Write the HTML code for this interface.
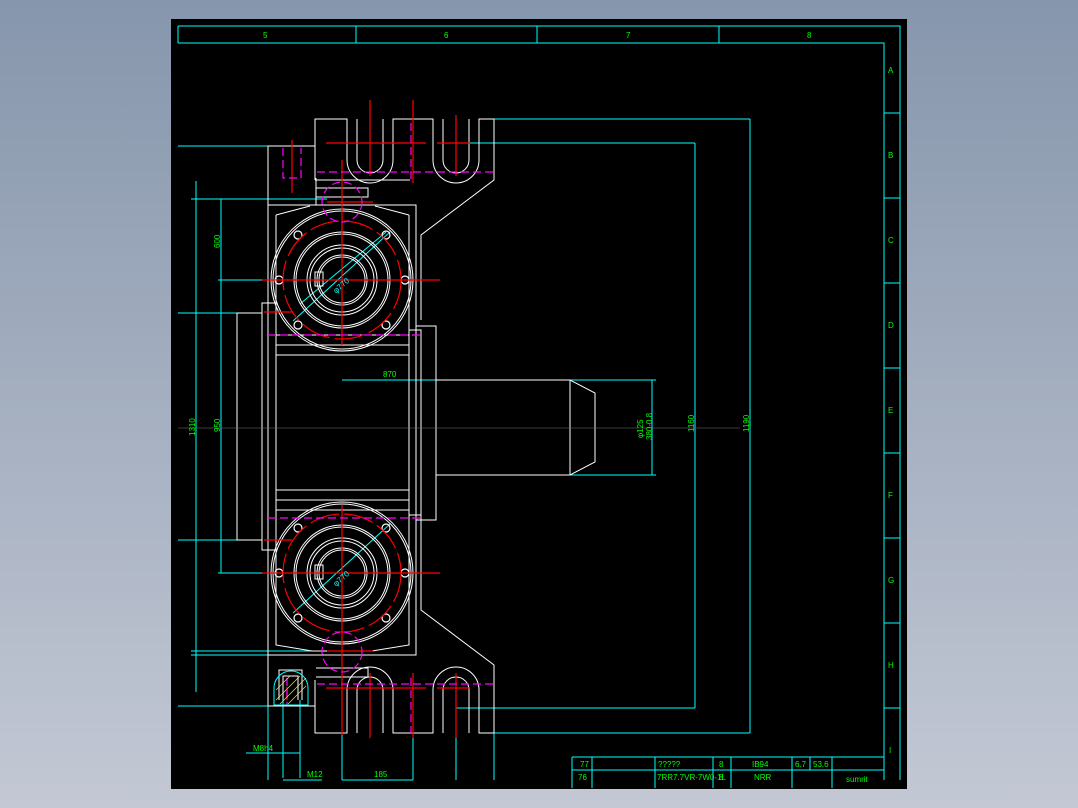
<!DOCTYPE html>
<html><head><style>
html,body{margin:0;padding:0;width:1078px;height:808px;overflow:hidden;background:linear-gradient(#8696ac,#c3c8d4);}
svg{position:absolute;left:0;top:0}
text{font-family:"Liberation Sans",sans-serif;fill:#00ff00;font-size:8px}
</style></head><body>
<svg width="1078" height="808" viewBox="0 0 1078 808">
<rect x="171" y="19" width="736" height="770" fill="#000"/>
<g stroke="#00ffff" stroke-width="1" fill="none">
<path d="M178 26H900V780M178 43H884V780M178 26V43M356 26V43M537 26V43M719 26V43"/>
<path d="M884 113H900M884 198H900M884 283H900M884 368H900M884 453H900M884 538H900M884 623H900M884 708H900"/>
<path d="M572 757H884M572 770H884M572 757V788M592 757V788M655 757V788M713 757V788M731 757V788M792 757V788M810 757V770M832 757V788"/>
<!-- dims -->
<path d="M494 119H750M456 143H695M695 143V708M750 119V733M494 733H750M456 708H695"/>
<path d="M178 146H268M191 199H327M196 181V692M221 199V573M218 280H268M218 573H268M191 651H327M191 655H316M178 706H268"/>
<path d="M178 313H237M178 540H237M342 380H656M570 475H656M652 380V475"/>
<path d="M268 660V780M283 700V778M300 700V778M246 753H300M342 720V780M413 720V780M342 780H413M283 780H322M494 733V780M456 733V780"/>
<path d="M300 232L386 160" transform="translate(0,72)"/>
<path d="M293 321L390 232M293 613L390 524"/>
</g>
<g stroke="#ffffff" stroke-width="1" fill="none">
<!-- top base -->
<path d="M315 180V119H347V160A23 23 0 0 0 393 160V119H433V160A23 23 0 0 0 479 160V119H494V180L421 235V320"/>
<path d="M357 119V160A13 13 0 0 0 383 160V119M443 119V160A13 13 0 0 0 469 160V119"/>
<path d="M315 180H410M316 178V205M316 188H368V197H316"/>
<path d="M268 146H315M268 146V205"/>
<!-- body -->
<path d="M268 205H416V655H268Z"/>
<path d="M276 215L310 206M409 215L375 206M276 215V345M409 215V345"/>
<path d="M276 335H409M276 345H409M276 355H409M276 490H409M276 500H409M276 510H409"/>
<path d="M276 510V645L312 651H372L409 645V510"/>
<path d="M237 313H262V540H237ZM262 303H276V550H262ZM416 326H436V520H416ZM409 330H421V515H409Z"/>
<path d="M436 380H570L595 393V462L570 475H436"/>
<path d="M570 380V475"/>
<!-- bottom base -->
<path d="M421 515V610L494 665V733H479V690A23 23 0 0 0 433 690V733H393V690A23 23 0 0 0 347 690V733H315V680"/>
<path d="M357 733V690A13 13 0 0 1 383 690V733M443 733V690A13 13 0 0 1 469 690V733"/>
<path d="M316 668H368V677H316"/>
<path d="M268 655V706H315"/>
<!-- circles -->
<circle cx="342" cy="280" r="71"/><circle cx="342" cy="280" r="69"/>
<circle cx="342" cy="280" r="48"/><circle cx="342" cy="280" r="46"/>
<circle cx="342" cy="280" r="35"/><circle cx="342" cy="280" r="32"/>
<circle cx="342" cy="280" r="25"/><circle cx="342" cy="280" r="23"/>
<circle cx="342" cy="573" r="71"/><circle cx="342" cy="573" r="69"/>
<circle cx="342" cy="573" r="48"/><circle cx="342" cy="573" r="46"/>
<circle cx="342" cy="573" r="35"/><circle cx="342" cy="573" r="32"/>
<circle cx="342" cy="573" r="25"/><circle cx="342" cy="573" r="23"/>
<g stroke-width="1.2">
<circle cx="298" cy="235" r="4"/><circle cx="386" cy="235" r="4"/><circle cx="298" cy="325" r="4"/><circle cx="386" cy="325" r="4"/>
<circle cx="279" cy="280" r="4"/><circle cx="405" cy="280" r="4"/>
<circle cx="298" cy="528" r="4"/><circle cx="386" cy="528" r="4"/><circle cx="298" cy="618" r="4"/><circle cx="386" cy="618" r="4"/>
<circle cx="279" cy="573" r="4"/><circle cx="405" cy="573" r="4"/>
</g>
<rect x="315" y="272" width="8" height="14"/><rect x="315" y="565" width="8" height="14"/>
<path d="M279 700V670H302V700M283 700V676H298V700"/>
</g>
<g stroke="#ff0000" stroke-width="1.2" fill="none">
<circle cx="342" cy="280" r="59" stroke-dasharray="30 5"/>
<circle cx="342" cy="573" r="59" stroke-dasharray="30 5"/>
<path d="M342 160V345M262 280H440M342 505V735M262 573H440M327 202H373M327 651H373M264 312H292M264 540H292"/>
<path d="M370 100V176M326 143H426M413 100V183M456 115V176M437 143H470M292 140V193"/>
<path d="M370 673V738M326 688H426M413 673V738M456 673V738M437 688H470M287 687V700"/>
</g>
<g stroke="#ff00ff" stroke-width="1.2" fill="none" stroke-dasharray="8 4">
<path d="M317 172H494M317 684H494M268 335H421M268 518H421M411 123V180M411 678V735"/>
<circle cx="342" cy="202" r="20"/><circle cx="342" cy="652" r="20"/>
<path d="M283 148V178H301V148M287 678V705"/>
</g>
<path d="M274 688A16 16 0 0 1 308 688V705H274Z" fill="none" stroke="#00ffff"/>
<g stroke="#ffff00" stroke-width="0.6"><path d="M276 700L300 676M280 704L306 678M288 704L306 686M276 690L290 676"/></g>
<g stroke="#777" stroke-width="0.6"><path d="M178 428H740"/></g>
<g>
<text x="263" y="38">5</text><text x="444" y="38">6</text><text x="626" y="38">7</text><text x="807" y="38">8</text>
<text x="888" y="73">A</text><text x="888" y="158">B</text><text x="888" y="243">C</text><text x="888" y="328">D</text><text x="888" y="413">E</text><text x="888" y="498">F</text><text x="888" y="583">G</text><text x="888" y="668">H</text><text x="889" y="753">I</text>
<text x="383" y="377">870</text><text x="374" y="777">185</text><text x="307" y="777">M12</text><text x="253" y="751">M8h4</text>
<text x="580" y="767">77</text><text x="658" y="767">?????</text><text x="719" y="767">8</text><text x="752" y="767">IB94</text><text x="795" y="767">6.7</text><text x="813" y="767">53.6</text>
<text x="578" y="780">76</text><text x="657" y="780">7RR7.7VR-7W0-1L</text><text x="719" y="780">8</text><text x="754" y="780">NRR</text><text x="846" y="782">sumrit</text>
<text transform="translate(220,248) rotate(-90)">600</text>
<text transform="translate(195,436) rotate(-90)">1310</text>
<text transform="translate(220,432) rotate(-90)">950</text>
<text transform="translate(694,432) rotate(-90)">1160</text>
<text transform="translate(749,432) rotate(-90)">1190</text>
<text transform="translate(643,438) rotate(-90)">φ125</text>
<text transform="translate(652,440) rotate(-90)">380-0.8</text>
</g>
<g font-size="7"><text x="330" y="290" transform="rotate(-42 338 284)" fill="#00ffff" style="fill:#00ffff">φ770</text>
<text x="330" y="583" transform="rotate(-42 338 577)" style="fill:#00ffff">φ770</text></g>
</svg>
</body></html>
